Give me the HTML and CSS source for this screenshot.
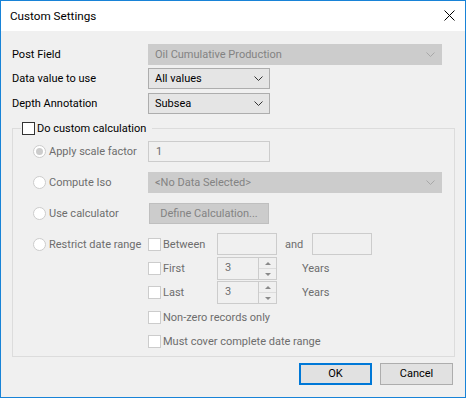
FILE: index.html
```html
<!DOCTYPE html>
<html lang="en">
<head>
    <meta charset="UTF-8">
    <title>Custom Settings</title>
    <link rel="stylesheet" href="styles.css">
</head>
<body>

    <div class="window">
        <div class="titlebar">
            <span class="title">Custom Settings</span>
            <svg class="close" width="11" height="11" viewBox="0 0 11 11"><path d="M0.5 0.5L10.5 10.5M10.5 0.5L0.5 10.5" stroke="#000" stroke-width="1"/></svg>
        </div>

        <div class="content">
            <div class="field-row">
                <span class="field-label">Post Field</span>
                <div class="combo combo-wide disabled">
                    <span>Oil Cumulative Production</span>
                    <svg class="chevron" width="9" height="5" viewBox="0 0 9 5"><path d="M0.5 0.5L4.5 4.5L8.5 0.5" fill="none"/></svg>
                </div>
            </div>
            <div class="field-row row-data">
                <span class="field-label">Data value to use</span>
                <div class="combo">
                    <span>All values</span>
                    <svg class="chevron" width="9" height="5" viewBox="0 0 9 5"><path d="M0.5 0.5L4.5 4.5L8.5 0.5" fill="none"/></svg>
                </div>
            </div>
            <div class="field-row row-depth">
                <span class="field-label">Depth Annotation</span>
                <div class="combo">
                    <span>Subsea</span>
                    <svg class="chevron" width="9" height="5" viewBox="0 0 9 5"><path d="M0.5 0.5L4.5 4.5L8.5 0.5" fill="none"/></svg>
                </div>
            </div>

            <fieldset class="group">
                <legend><span class="check enabled"></span>Do custom calculation</legend>

                <div class="group-row row-scale">
                    <span class="option"><span class="radio checked"></span>Apply scale factor</span>
                    <div class="textbox">1</div>
                </div>
                <div class="group-row row-gap">
                    <span class="option"><span class="radio"></span>Compute Iso</span>
                    <div class="combo combo-wide disabled">
                        <span>&lt;No Data Selected&gt;</span>
                        <svg class="chevron" width="9" height="5" viewBox="0 0 9 5"><path d="M0.5 0.5L4.5 4.5L8.5 0.5" fill="none"/></svg>
                    </div>
                </div>
                <div class="group-row row-gap">
                    <span class="option"><span class="radio"></span>Use calculator</span>
                    <div class="push disabled">Define Calculation...</div>
                </div>
                <div class="group-row row-between">
                    <span class="option"><span class="radio"></span>Restrict date range</span>
                    <span class="sub-option"><span class="check"></span>Between</span>
                    <div class="textbox small"></div>
                    <span class="and">and</span>
                    <div class="textbox small"></div>
                </div>
                <div class="group-row row-first">
                    <span class="option"></span>
                    <span class="sub-option"><span class="check"></span>First</span>
                    <div class="spin">
                        <span class="spin-value">3</span>
                        <span class="spin-buttons"><span class="up"></span><span class="down"></span></span>
                    </div>
                    <span class="unit">Years</span>
                </div>
                <div class="group-row row-last">
                    <span class="option"></span>
                    <span class="sub-option"><span class="check"></span>Last</span>
                    <div class="spin">
                        <span class="spin-value">3</span>
                        <span class="spin-buttons"><span class="up"></span><span class="down"></span></span>
                    </div>
                    <span class="unit">Years</span>
                </div>
                <div class="group-row row-nonzero">
                    <span class="option"></span>
                    <span class="sub-option"><span class="check"></span>Non-zero records only</span>
                </div>
                <div class="group-row row-cover">
                    <span class="option"></span>
                    <span class="sub-option"><span class="check"></span>Must cover complete date range</span>
                </div>
            </fieldset>

            <div class="buttons">
                <div class="btn btn-default">OK</div>
                <div class="btn">Cancel</div>
            </div>
        </div>
    </div>

</body>
</html>
```

FILE: styles.css
```css
/* General */
body {
    margin: 0;
    padding: 0;
    font-family: 'Roboto', 'Liberation Sans', sans-serif;
    font-size: 11px;
    color: #000;
    background: #fff;
    white-space: nowrap;
}

.window {
    width: 466px;
    height: 398px;
    box-sizing: border-box;
    border: 1px solid #1883d7;
    background: #f0f0f0;
}

/* Title bar */
.titlebar {
    height: 30px;
    background: #fff;
    display: flex;
    align-items: center;
    justify-content: space-between;
    padding: 0 10px 0 9px;
}
.title {
    font-size: 11.7px;
}
.close {
    display: block;
    margin-top: -1px;
}

/* Content */
.content {
    padding: 13px 10px 0 11px;
}

.field-row {
    display: flex;
    align-items: center;
    height: 21px;
}
.row-data {
    margin-top: 3px;
}
.row-depth {
    margin-top: 4px;
}
.field-label {
    width: 136px;
    flex-shrink: 0;
}

/* Combo boxes */
.combo {
    width: 122px;
    height: 21px;
    flex-shrink: 0;
    box-sizing: border-box;
    border: 1px solid #adadad;
    background: #e5e5e5;
    display: flex;
    align-items: center;
    justify-content: space-between;
    padding: 0 6px 0 6px;
}
.combo .chevron {
    stroke: #333;
}
.combo-wide {
    width: 294px;
}
.combo.disabled {
    background: #cccccc;
    border-color: #cccccc;
    color: #838383;
}
.combo.disabled .chevron {
    stroke: #a8a8a8;
}

/* Group box */
.group {
    width: 443px;
    box-sizing: border-box;
    margin: 7px 0 0 0;
    border: 1px solid #dcdcdc;
    padding: 5px 11px 5px 20px;
    min-width: 0;
}
.group legend {
    margin-left: -12px;
    padding: 0 6px 0 1px;
    line-height: 15px;
    display: flex;
    align-items: center;
}

.group-row {
    display: flex;
    align-items: center;
    height: 21px;
    color: #6d6d6d;
}
.row-gap {
    margin-top: 10px;
}
.row-between {
    margin-top: 9px;
    height: 22px;
}
.row-first {
    margin-top: 2px;
    height: 23px;
}
.row-last {
    margin-top: 1px;
    height: 23px;
}
.row-nonzero {
    margin-top: 3px;
    height: 20px;
}
.row-cover {
    margin-top: 4px;
    height: 20px;
}

.option {
    width: 115px;
    flex-shrink: 0;
    display: flex;
    align-items: center;
}
.sub-option {
    width: 69px;
    flex-shrink: 0;
    display: flex;
    align-items: center;
}

/* Radio and check marks */
.radio {
    width: 13px;
    height: 13px;
    flex-shrink: 0;
    box-sizing: border-box;
    border: 1px solid #cccccc;
    border-radius: 50%;
    background: #fff;
    margin-right: 3px;
    display: flex;
    align-items: center;
    justify-content: center;
}
.radio.checked::after {
    content: "";
    width: 7px;
    height: 7px;
    border-radius: 50%;
    background: #cccccc;
}
.check {
    width: 13px;
    height: 13px;
    flex-shrink: 0;
    box-sizing: border-box;
    border: 1px solid #cccccc;
    background: #fff;
    margin-right: 2px;
}
.check.enabled {
    border-color: #333;
}

/* Text boxes and buttons */
.textbox {
    width: 122px;
    height: 21px;
    flex-shrink: 0;
    box-sizing: border-box;
    border: 1px solid #cccccc;
    background: #f0f0f0;
    padding: 0 7px;
    line-height: 19px;
}
.textbox.small {
    width: 60px;
    height: 22px;
}
.and {
    margin: 0 10px 0 8px;
    width: 17px;
}
.push {
    width: 120px;
    height: 21px;
    margin-left: 1px;
    box-sizing: border-box;
    border: 1px solid #bfbfbf;
    background: #cccccc;
    color: #838383;
    text-align: center;
    line-height: 19px;
}

/* Spin boxes */
.spin {
    width: 60px;
    height: 23px;
    flex-shrink: 0;
    box-sizing: border-box;
    border: 1px solid #cccccc;
    background: #f0f0f0;
    display: flex;
}
.spin-value {
    flex: 1;
    padding: 0 7px;
    line-height: 19px;
}
.spin-buttons {
    width: 17px;
    display: flex;
    flex-direction: column;
    border-left: 1px solid #cccccc;
}
.spin-buttons span {
    flex: 1;
    display: flex;
    align-items: center;
    justify-content: center;
}
.spin-buttons .up {
    border-bottom: 1px solid #dcdcdc;
}
.spin-buttons .up::after {
    content: "";
    border-left: 3px solid transparent;
    border-right: 3px solid transparent;
    border-bottom: 3px solid #8a8a8a;
}
.spin-buttons .down::after {
    content: "";
    border-left: 3px solid transparent;
    border-right: 3px solid transparent;
    border-top: 3px solid #8a8a8a;
}
.unit {
    margin-left: 25px;
}

/* Dialog buttons */
.buttons {
    display: flex;
    justify-content: flex-end;
    gap: 8px;
    margin-top: 6px;
    padding-right: 2px;
}
.btn {
    width: 73px;
    height: 22px;
    box-sizing: border-box;
    border: 1px solid #adadad;
    background: #e1e1e1;
    text-align: center;
    line-height: 20px;
}
.btn-default {
    border: 2px solid #0078d7;
    line-height: 18px;
}
```
